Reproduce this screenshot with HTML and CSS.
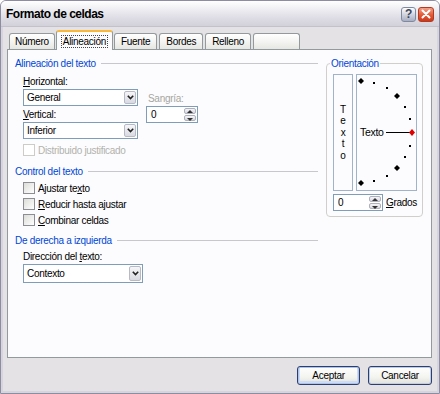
FILE: index.html
```html
<!DOCTYPE html>
<html lang="es">
<head>
    <meta charset="UTF-8">
    <title>Formato de celdas</title>
    <link rel="stylesheet" href="styles.css">
</head>
<body>

<div class="window">
    <div class="titlebar">
        <span class="title">Formato de celdas</span>
        <div class="caption-buttons">
            <span class="cbtn help">?</span>
            <span class="cbtn close">
                <svg width="10" height="10" viewBox="0 0 10 10"><path d="M1.5 1.5 L8.5 8.5 M8.5 1.5 L1.5 8.5" stroke="#fff" stroke-width="2" stroke-linecap="round"/></svg>
            </span>
        </div>
    </div>

    <div class="dialog">
        <!-- Pestañas -->
        <div class="tabs">
            <span class="tab">Número</span>
            <span class="tab active"><span class="focus">Alineación</span></span>
            <span class="tab">Fuente</span>
            <span class="tab">Bordes</span>
            <span class="tab">Relleno</span>
            <span class="tab blank"></span>
        </div>

        <div class="panel">
            <div class="left">
                <div class="group-title first"><span>Alineación del texto</span><i></i></div>

                <div class="align-row">
                    <div class="align-col">
                        <div class="label"><u>H</u>orizontal:</div>
                        <div class="select"><span>General</span><b class="drop"><svg width="7" height="5" viewBox="0 0 7 5"><path d="M0.8 0.8 L3.5 3.6 L6.2 0.8" fill="none" stroke="#222" stroke-width="1.6"/></svg></b></div>
                        <div class="label vlabel"><u>V</u>ertical:</div>
                        <div class="select"><span>Inferior</span><b class="drop"><svg width="7" height="5" viewBox="0 0 7 5"><path d="M0.8 0.8 L3.5 3.6 L6.2 0.8" fill="none" stroke="#222" stroke-width="1.6"/></svg></b></div>
                    </div>
                    <div class="indent-col">
                        <div class="label disabled">Sangría:</div>
                        <div class="spin"><span>0</span><b class="spin-btns"><i class="up"></i><i class="down"></i></b></div>
                    </div>
                </div>

                <div class="check-row dim"><i class="box"></i>Distribuido justificado</div>

                <div class="group-title"><span>Control del texto</span><i></i></div>
                <div class="checks">
                    <div class="check-row"><i class="box"></i>Ajustar te<u>x</u>to</div>
                    <div class="check-row"><i class="box"></i><u>R</u>educir hasta ajustar</div>
                    <div class="check-row"><i class="box"></i><u>C</u>ombinar celdas</div>
                </div>

                <div class="group-title rtl"><span>De derecha a izquierda</span><i></i></div>
                <div class="label dir-label">Dirección del <u>t</u>exto:</div>
                <div class="select wide"><span>Contexto</span><b class="drop"><svg width="7" height="5" viewBox="0 0 7 5"><path d="M0.8 0.8 L3.5 3.6 L6.2 0.8" fill="none" stroke="#222" stroke-width="1.6"/></svg></b></div>
            </div>

            <fieldset class="orient">
                <legend>Orientación</legend>
                <div class="orient-boxes">
                    <div class="vtext"><span>T</span><span>e</span><span>x</span><span>t</span><span>o</span></div>
                    <div class="arc">
                        <svg width="59" height="115" viewBox="1 1 59 115">
                            <g fill="#000">
                                <path d="M5 4 L8 7 L5 10 L2 7 Z"/>
                                <rect x="17" y="8" width="2" height="2"/>
                                <rect x="30" y="13" width="2" height="2"/>
                                <path d="M41 19 L44 22 L41 25 L38 22 Z"/>
                                <rect x="48" y="32" width="2" height="2"/>
                                <rect x="53" y="44" width="2" height="2"/>
                                <rect x="53" y="71" width="2" height="2"/>
                                <rect x="48" y="82" width="2" height="2"/>
                                <path d="M41 91 L44 94 L41 97 L38 94 Z"/>
                                <rect x="30" y="101" width="2" height="2"/>
                                <rect x="17" y="106" width="2" height="2"/>
                                <path d="M5 106 L8 109 L5 112 L2 109 Z"/>
                            </g>
                            <text x="4" y="62" class="arc-text">Texto</text>
                            <line x1="30" y1="58.5" x2="54" y2="58.5" stroke="#000" stroke-width="1"/>
                            <path d="M56 55 L59 58.5 L56 62 L53 58.5 Z" fill="#e00000"/>
                        </svg>
                    </div>
                </div>
                <div class="degrees">
                    <div class="spin small"><span>0</span><b class="spin-btns"><i class="up"></i><i class="down"></i></b></div>
                    <span class="label"><u>G</u>rados</span>
                </div>
            </fieldset>
        </div>

        <div class="actions">
            <button class="btn default">Aceptar</button>
            <button class="btn">Cancelar</button>
        </div>
    </div>
</div>

</body>
</html>
```

FILE: styles.css
```css
body {
    margin: 0;
    background: #fff;
    font-family: "Liberation Sans", Arial, sans-serif;
    font-size: 10px;
    letter-spacing: -0.3px;
    color: #000;
}
.window {
    width: 440px;
    height: 394px;
    box-sizing: border-box;
    border: 1px solid #8e8ca2;
    border-radius: 6px 6px 0 0;
    background: #e4e2e5;
    box-shadow: inset 0 0 0 2px #d6d4dc;
    display: flex;
    flex-direction: column;
    overflow: hidden;
}
.titlebar {
    height: 25px;
    flex-shrink: 0;
    display: flex;
    align-items: center;
    justify-content: space-between;
    padding: 0 5px 0 5px;
    background: linear-gradient(#ffffff, #eeedf2 35%, #dddce4 70%, #d2d1da);
    border-bottom: 1px solid #c2c1cc;
}
.title {
    font-size: 12px;
    font-weight: bold;
    letter-spacing: -0.5px;
    color: #000;
}
.caption-buttons {
    display: flex;
    gap: 2px;
    margin-top: 1px;
}
.cbtn {
    width: 15px;
    height: 15px;
    border-radius: 3px;
    display: flex;
    align-items: center;
    justify-content: center;
    box-sizing: border-box;
}
.help {
    border: 1px solid #7f8a9e;
    background: linear-gradient(#fdfdfe, #c9cddb 60%, #a9afc3);
    color: #3e4658;
    font-weight: bold;
    font-size: 12px;
}
.close {
    width: 16px;
    border: 1px solid #b23a24;
    background: linear-gradient(#f2a089, #e25a35 55%, #c8391c);
}

/* Cuerpo del diálogo */
.dialog {
    flex: 1;
    display: flex;
    flex-direction: column;
    padding: 3px 7px 0 6px;
}
.tabs {
    display: flex;
    align-items: flex-end;
    padding-left: 2px;
    gap: 2px;
    height: 19px;
    position: relative;
    z-index: 1;
}
.tab {
    height: 16px;
    box-sizing: border-box;
    padding: 0 6px;
    line-height: 15px;
    border: 1px solid #919b9c;
    border-bottom: none;
    border-radius: 3px 3px 0 0;
    background: linear-gradient(#ffffff, #f4f4f2 50%, #e6e6e2);
}
.tab:first-child { padding: 0 5px; }
.tab.active {
    height: 20px;
    margin-bottom: -1px;
    margin-left: -1px;
    margin-right: -1px;
    background: #fcfcfe;
    border-top: 2px solid #f9b83a;
    padding: 2px 5px 0;
}
.tab .focus {
    outline: 1px dotted #444;
    padding: 0 1px;
}
.tab.blank {
    width: 47px;
}
.panel {
    height: 309px;
    box-sizing: border-box;
    border: 1px solid #919b9c;
    background: #fcfcfe;
    display: flex;
    padding: 7px 7px 0 7px;
    gap: 8px;
}
.left {
    width: 303px;
    display: flex;
    flex-direction: column;
}
.group-title {
    display: flex;
    align-items: center;
    height: 13px;
    color: #0046d5;
}
.group-title i {
    flex: 1;
    height: 1px;
    margin-left: 5px;
    background: #c8c8cc;
}
.group-title:not(.first) { margin-top: 7px; }
.group-title.rtl { margin-top: 6px; }
.label {
    height: 13px;
    line-height: 13px;
}
.label.disabled { color: #a6a6a0; }
.align-row {
    display: flex;
    gap: 8px;
    margin: 5px 0 0 8px;
}
.align-col {
    width: 115px;
    display: flex;
    flex-direction: column;
}
.vlabel { margin-top: 2px; }
.select {
    height: 17px;
    box-sizing: border-box;
    border: 1px solid #7f9db9;
    background: #fff;
    display: flex;
    align-items: stretch;
    justify-content: space-between;
    margin-top: 1px;
}
.select span {
    padding-left: 3px;
    line-height: 15px;
}
.select.wide {
    width: 120px;
    height: 19px;
    margin-left: 8px;
}
.select.wide span { line-height: 17px; }
.drop {
    width: 12px;
    margin: 1px;
    box-sizing: border-box;
    border: 1px solid #b7b9c4;
    border-radius: 2px;
    background: linear-gradient(#f6f6f8, #d9dae2);
    display: flex;
    align-items: center;
    justify-content: center;
}
.indent-col {
    padding-top: 17px;
    display: flex;
    flex-direction: column;
}
.indent-col .label { padding-left: 2px; }
.spin {
    width: 52px;
    height: 17px;
    box-sizing: border-box;
    border: 1px solid #7f9db9;
    background: #fff;
    display: flex;
    justify-content: space-between;
    margin-top: 1px;
}
.spin span {
    padding-left: 4px;
    line-height: 15px;
}
.spin-btns {
    width: 12px;
    margin: 1px;
    display: flex;
    flex-direction: column;
    gap: 1px;
}
.spin-btns i {
    flex: 1;
    border: 1px solid #aeb0bc;
    border-radius: 2px;
    background: linear-gradient(#f6f6f8, #d7d8e0);
    position: relative;
}
.spin-btns i::after {
    content: "";
    position: absolute;
    left: 2px;
    border-left: 3px solid transparent;
    border-right: 3px solid transparent;
}
.spin-btns .up::after { top: 1px; border-bottom: 3px solid #333; }
.spin-btns .down::after { top: 2px; border-top: 3px solid #333; }
.check-row {
    display: flex;
    align-items: center;
    height: 16px;
    margin-left: 8px;
}
.check-row .box {
    width: 12px;
    height: 12px;
    box-sizing: border-box;
    border: 1px solid #8d8e94;
    background: linear-gradient(135deg, #dcdcd8, #ffffff);
    margin-right: 3px;
}
.check-row.dim {
    margin-top: 3px;
    color: #b2b2ac;
}
.check-row.dim .box {
    border-color: #cdcdc6;
    background: #fff;
}
.checks {
    margin-top: 2px;
}
.dir-label {
    margin: 3px 0 0 8px;
}

/* Orientación */
.orient {
    width: 97px;
    height: 160px;
    box-sizing: border-box;
    margin: 0;
    padding: 4px 5px 4px 6px;
    border: 1px solid #d0d0c8;
    border-radius: 4px;
    min-width: 0;
}
.orient legend {
    color: #0046d5;
    padding: 0 1px;
    margin-left: -3px;
    line-height: 13px;
}
.orient-boxes {
    display: flex;
    gap: 3px;
    height: 117px;
}
.vtext {
    width: 20px;
    box-sizing: border-box;
    border: 1px solid #9fb4cb;
    display: flex;
    flex-direction: column;
    align-items: center;
    justify-content: center;
    line-height: 11.5px;
}
.arc {
    width: 61px;
    box-sizing: border-box;
    border: 1px solid #9fb4cb;
}
.arc svg { display: block; }
.arc-text {
    font-family: "Liberation Sans", Arial, sans-serif;
    font-size: 10.5px;
}
.degrees {
    display: flex;
    align-items: center;
    gap: 3px;
    margin-top: 3px;
}
.spin.small {
    width: 50px;
    margin-top: 0;
}

/* Botones */
.actions {
    display: flex;
    justify-content: flex-end;
    gap: 8px;
    margin-top: 8px;
}
.btn {
    width: 64px;
    height: 19px;
    padding: 0;
    border: 1px solid #2d3f6e;
    border-radius: 3px;
    background: linear-gradient(#ffffff, #f3f3ef 60%, #e2e2dc);
    box-shadow: inset 0 -1px 0 #c5cde0, inset 0 0 0 1px #bccbe8;
    font-family: "Liberation Sans", Arial, sans-serif;
    font-size: 10px;
    letter-spacing: -0.3px;
    color: #000;
}
.btn.default {
    width: 63px;
    box-shadow: inset 0 0 0 1px #aac4ee, inset 0 -1px 0 2px #cfdcf4;
}
```
